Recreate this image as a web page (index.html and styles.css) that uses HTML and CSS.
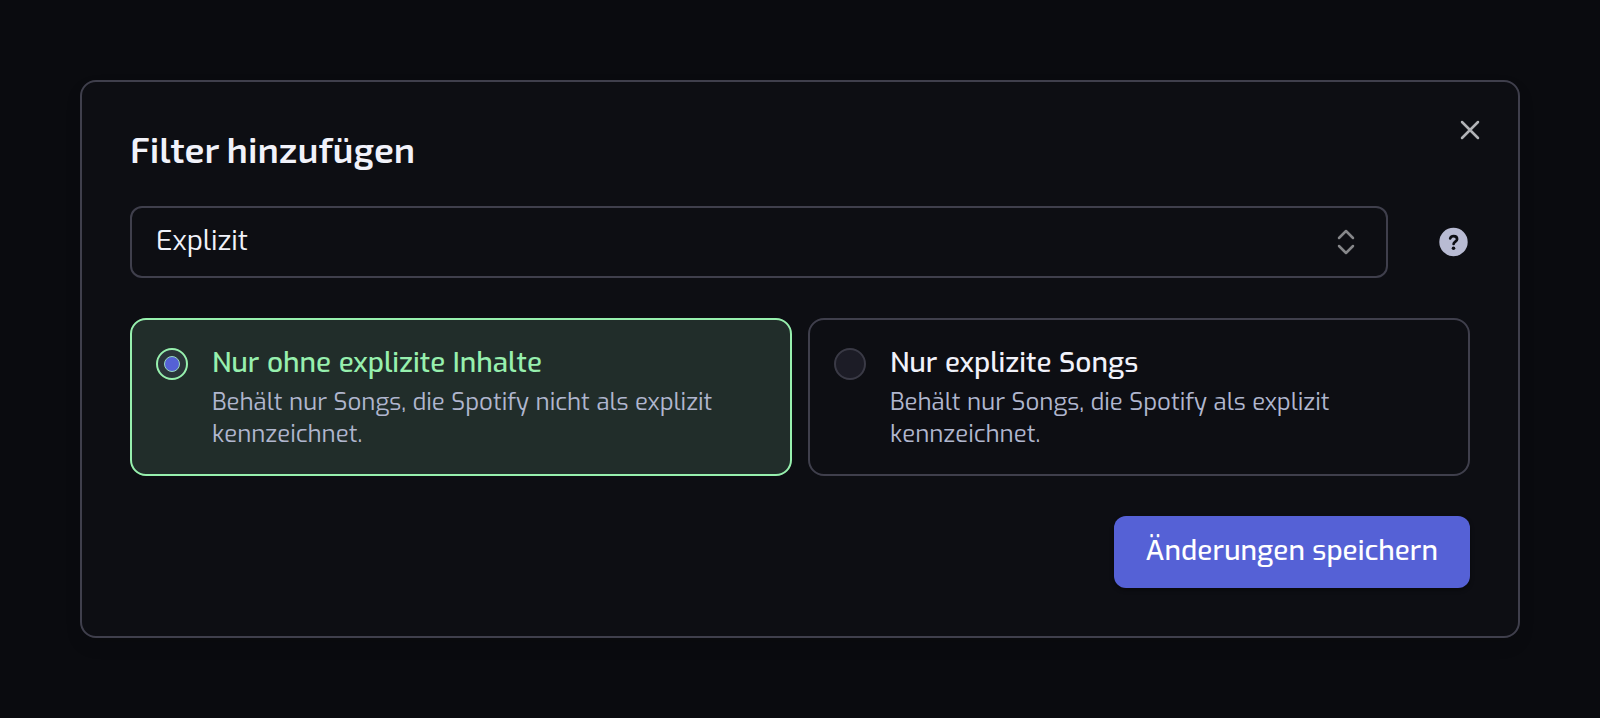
FILE: index.html
```html
<!DOCTYPE html>
<html lang="de">
<head>
  <meta charset="UTF-8">
  <meta name="viewport" content="width=device-width, initial-scale=1.0">
  <title>Filter hinzufügen</title>
  <link rel="stylesheet" href="styles.css">
</head>
<body>
  <form class="dialog">
    <button type="button" class="icon-button close" aria-label="Schließen">
      <svg width="24" height="24" viewBox="0 0 24 24" fill="none" stroke="currentColor" stroke-width="2.5" stroke-linecap="round">
        <path d="M4 4l16 16M20 4L4 20"/>
      </svg>
    </button>

    <h1>Filter hinzufügen</h1>

    <div class="filter-row">
      <div class="select-box">
        <select id="filter-type" aria-label="Filter">
          <option>Explizit</option>
        </select>
        <svg class="chevrons" width="24" height="32" viewBox="0 0 24 32" fill="none" stroke="currentColor" stroke-width="2.5" stroke-linecap="round" stroke-linejoin="round">
          <path d="M5 12l7-7 7 7M5 20l7 7 7-7"/>
        </svg>
      </div>
      <button type="button" class="icon-button help" aria-label="Hilfe">
        <svg width="32" height="32" viewBox="0 0 32 32" fill="none">
          <circle cx="15.5" cy="16" r="14.2" fill="currentColor"/>
          <path d="M12.2 12.4c.5-1.4 1.8-2.3 3.4-2.3 2 0 3.5 1.3 3.5 3.1 0 2.3-3.5 2.5-3.5 4.8" stroke="#0d0e13" stroke-width="2.7" stroke-linecap="round"/>
          <circle cx="15.5" cy="22.3" r="1.8" fill="#0d0e13"/>
        </svg>
      </button>
    </div>

    <div class="options">
      <label class="option">
        <input type="radio" name="explicit" value="clean" checked>
        <span class="option-text">
          <span class="option-title">Nur ohne explizite Inhalte</span>
          <span class="option-info">Behält nur Songs, die Spotify nicht als explizit kennzeichnet.</span>
        </span>
      </label>
      <label class="option">
        <input type="radio" name="explicit" value="explicit">
        <span class="option-text">
          <span class="option-title">Nur explizite Songs</span>
          <span class="option-info">Behält nur Songs, die Spotify als explizit kennzeichnet.</span>
        </span>
      </label>
    </div>

    <div class="actions">
      <button type="submit" class="save">Änderungen speichern</button>
    </div>
  </form>
</body>
</html>
```
FILE: styles.css
```css
* {
  box-sizing: border-box;
}
body {
  margin: 0;
  padding: 80px;
  min-height: 100vh;
  background: #0a0b0f;
  border-bottom: 2px solid #000;
  color: #f1f2fa;
  font-family: Exo, "Exo 2", Roboto, sans-serif;
}
.dialog {
  position: relative;
  padding: 48px;
  background: #0d0e13;
  border: 2px solid #3f3f4c;
  border-radius: 16px;
  box-shadow: 0 8px 16px rgba(0, 0, 0, 0.1);
}
h1 {
  margin: 0 0 38px;
  font-family: "Exo 2", Exo, Roboto, sans-serif;
  font-size: 36px;
  line-height: 38px;
  font-weight: 600;
}
.icon-button {
  display: block;
  padding: 0;
  border: none;
  background: none;
  cursor: pointer;
}
.icon-button svg {
  display: block;
}
.close {
  position: absolute;
  top: 36px;
  right: 36px;
  color: #b2b3b7;
}
.filter-row {
  display: flex;
  align-items: center;
  gap: 50px;
}
.select-box {
  position: relative;
  flex: 1;
}
select {
  appearance: none;
  display: block;
  width: 100%;
  height: 72px;
  padding: 0 72px 4px 24px;
  background: #0d0e13;
  border: 2px solid #3f3f4c;
  border-radius: 12px;
  color: inherit;
  font: inherit;
  font-size: 28px;
}
.chevrons {
  position: absolute;
  top: 20px;
  right: 30px;
  color: #86878a;
  pointer-events: none;
}
.help {
  color: #b8bbd3;
}
.options {
  display: grid;
  grid-template-columns: 1fr 1fr;
  gap: 16px;
  margin: 40px 0;
}
.option {
  display: flex;
  align-items: flex-start;
  gap: 24px;
  padding: 24px;
  border: 2px solid #3f3f4c;
  border-radius: 16px;
  cursor: pointer;
}
.option:has(input:checked) {
  background: #212d2a;
  border-color: #97f0ae;
}
.option input {
  appearance: none;
  flex: none;
  display: grid;
  place-items: center;
  width: 32px;
  height: 32px;
  margin: 4px 0 0;
  background: #1c1c26;
  border: 2px solid #3a3a46;
  border-radius: 50%;
}
.option input:checked {
  background: #2a3539;
  border-color: #97f0ae;
}
.option input:checked::before {
  content: "";
  width: 14px;
  height: 14px;
  background: #5561d6;
  border: 1px solid #97d8c0;
  border-radius: 50%;
}
.option-text {
  display: flex;
  flex-direction: column;
  gap: 4px;
}
.option-title {
  font-size: 28px;
  line-height: 38px;
  font-weight: 500;
}
.option input:checked + .option-text .option-title {
  color: #97f0ae;
}
.option-info {
  color: #b0b6ce;
  font-size: 24px;
  line-height: 32px;
}
.actions {
  display: flex;
  justify-content: flex-end;
}
.save {
  height: 72px;
  padding: 0 32px 4px;
  background: #5561d6;
  border: none;
  border-radius: 12px;
  box-shadow: 0 2px 4px rgba(0, 0, 0, 0.4);
  color: #fff;
  font: inherit;
  font-size: 28px;
  font-weight: 500;
  cursor: pointer;
}
```
